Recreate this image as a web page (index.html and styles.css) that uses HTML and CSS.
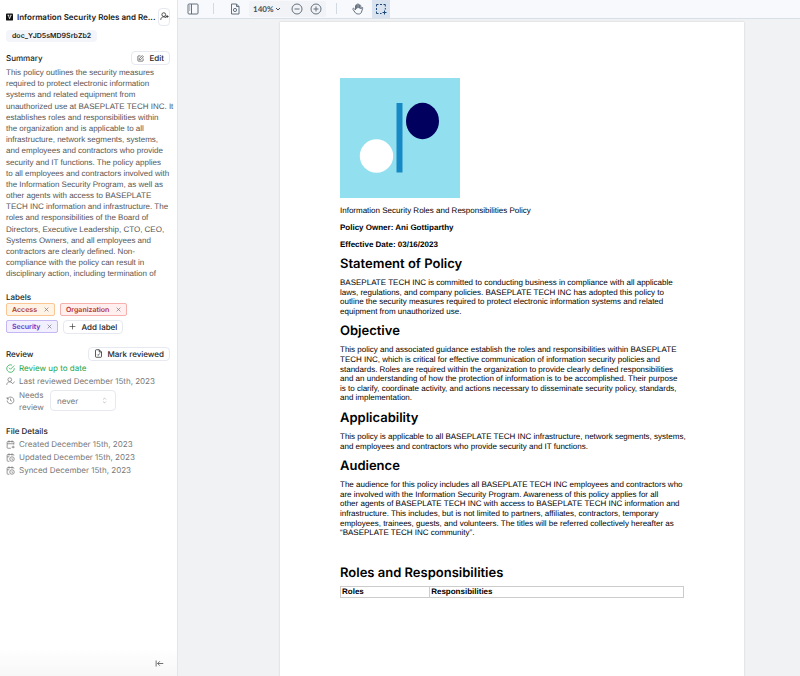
FILE: index.html
```html
<!DOCTYPE html>
<html lang="en">
<head>
<meta charset="utf-8">
<meta name="viewport" content="width=device-width, initial-scale=1">
<title>Information Security Roles and Responsibilities Policy</title>
<link rel="stylesheet" href="styles.css">
</head>
<body>
<div class="app">
  <aside class="sidebar">
    <header class="title-row">
      <svg class="logo" viewBox="0 0 8 8"><rect width="8" height="8" rx="1" fill="#111"/><path d="M1.8 2h2M4.8 2h1.5M2.7 2l1.4 4L5.6 2" fill="none" stroke="#fff" stroke-width=".9"/></svg>
      <h1>Information Security Roles and Re...</h1>
      <button class="btn btn-icon" aria-label="Add owner"><svg class="icon" viewBox="0 0 24 24"><circle cx="10" cy="7" r="5"/><path d="M2 21c0-5 3-8 8-8 3 0 5 1 6 3M19 8v8M15 12h8"/></svg></button>
    </header>
    <span class="doc-id">doc_YJD5sMD9SrbZb2</span>

    <section class="summary">
      <div class="section-head">
        <h2>Summary</h2>
        <button class="btn"><svg class="icon small" viewBox="0 0 24 24"><path d="M12 3H5a2 2 0 0 0-2 2v14a2 2 0 0 0 2 2h14a2 2 0 0 0 2-2v-7M18 2l4 4-10 10H8v-4z"/></svg>Edit</button>
      </div>
      <p>This policy outlines the security measures<br>required to protect electronic information<br>systems and related equipment from<br>unauthorized use at BASEPLATE TECH INC. It<br>establishes roles and responsibilities within<br>the organization and is applicable to all<br>infrastructure, network segments, systems,<br>and employees and contractors who provide<br>security and IT functions. The policy applies<br>to all employees and contractors involved with<br>the Information Security Program, as well as<br>other agents with access to BASEPLATE<br>TECH INC information and infrastructure. The<br>roles and responsibilities of the Board of<br>Directors, Executive Leadership, CTO, CEO,<br>Systems Owners, and all employees and<br>contractors are clearly defined. Non-<br>compliance with the policy can result in<br>disciplinary action, including termination of</p>
    </section>

    <section class="labels">
      <h2>Labels</h2>
      <div class="tags">
        <span class="tag access">Access<button aria-label="Remove Access"><svg viewBox="0 0 8 8"><path d="M1 1l6 6M7 1L1 7"/></svg></button></span>
        <span class="tag organization">Organization<button aria-label="Remove Organization"><svg viewBox="0 0 8 8"><path d="M1 1l6 6M7 1L1 7"/></svg></button></span>
        <span class="tag security">Security<button aria-label="Remove Security"><svg viewBox="0 0 8 8"><path d="M1 1l6 6M7 1L1 7"/></svg></button></span>
        <button class="btn add"><svg class="icon plus" viewBox="0 0 24 24"><path d="M12 2v20M2 12h20"/></svg>Add label</button>
      </div>
    </section>

    <section class="review">
      <div class="section-head">
        <h2>Review</h2>
        <button class="btn"><svg class="icon" viewBox="0 0 24 24"><path d="M14 2H6a2 2 0 0 0-2 2v16a2 2 0 0 0 2 2h12a2 2 0 0 0 2-2V8zM14 2v6h6M9 15l2 2 4-5"/></svg>Mark reviewed</button>
      </div>
      <div class="row ok"><svg class="icon" viewBox="0 0 24 24"><path d="M22 11v1a10 10 0 1 1-6-9M22 4L12 14l-4-4"/></svg>Review up to date</div>
      <div class="row"><svg class="icon" viewBox="0 0 24 24"><circle cx="10" cy="7" r="5"/><path d="M2 21c0-5 3-8 8-8 3 0 5 1 6 3M15 15l3 3 5-6"/></svg>Last reviewed December 15th, 2023</div>
      <div class="row needs">
        <svg class="icon" viewBox="0 0 24 24"><path d="M3 12a9 9 0 1 0 3-7L3 8M3 3v5h5M12 7v5l4 2"/></svg>
        <label for="interval">Needs review</label>
        <span class="select-box">
          <select id="interval"><option>never</option></select>
          <svg class="chevrons" viewBox="0 0 12 20"><path d="M2 7l4-4 4 4M2 13l4 4 4-4"/></svg>
        </span>
      </div>
    </section>

    <section class="details">
      <h2>File Details</h2>
      <div class="row"><svg class="icon" viewBox="0 0 24 24"><path d="M21 12V6a2 2 0 0 0-2-2H5a2 2 0 0 0-2 2v14a2 2 0 0 0 2 2h8M8 1v6M16 1v6M3 10h18M19 15v7M15 19h8"/></svg>Created December 15th, 2023</div>
      <div class="row"><svg class="icon" viewBox="0 0 24 24"><path d="M21 7V6a2 2 0 0 0-2-2H5a2 2 0 0 0-2 2v14a2 2 0 0 0 2 2h4M8 1v6M16 1v6M3 10h6M16 14v3l2 1"/><circle cx="16" cy="16" r="6"/></svg>Updated December 15th, 2023</div>
      <div class="row"><svg class="icon" viewBox="0 0 24 24"><path d="M21 7V6a2 2 0 0 0-2-2H5a2 2 0 0 0-2 2v14a2 2 0 0 0 2 2h4M8 1v6M16 1v6M3 10h6M16 14v3l2 1"/><circle cx="16" cy="16" r="6"/></svg>Synced December 15th, 2023</div>
    </section>

    <footer class="collapse">
      <button aria-label="Collapse sidebar"><svg class="icon" viewBox="0 0 24 24"><path d="M3 4v16M22 12H7M13 6l-6 6 6 6"/></svg></button>
    </footer>
  </aside>

  <main class="viewer">
    <nav class="toolbar" aria-label="Document tools">
      <button class="tool" aria-label="Toggle sidebar"><svg viewBox="0 0 12 12"><rect x="1" y="1" width="10" height="10" rx="1"/><path d="M4.500 1v10M2.200 3h1M2.200 5h1M2.200 7h1"/></svg></button>
      <span class="divider"></span>
      <button class="tool settings" aria-label="View controls"><svg viewBox="0 0 12 12"><path d="M7.500 1H2.500v10h7.500V3.500zM7.500 1v2.500H10"/><circle cx="6" cy="7" r="1.600"/></svg></button>
      <div class="zoom">
        <button class="level">140%<svg viewBox="0 0 6 6"><path d="M1 2l2 2 2-2"/></svg></button>
        <button class="tool" aria-label="Zoom out"><svg viewBox="0 0 12 12"><circle cx="6" cy="6" r="5"/><path d="M3.500 6h5"/></svg></button>
        <button class="tool" aria-label="Zoom in"><svg viewBox="0 0 12 12"><circle cx="6" cy="6" r="5"/><path d="M3.500 6h5M6 3.500v5"/></svg></button>
      </div>
      <span class="divider"></span>
      <button class="tool pan" aria-label="Pan"><svg viewBox="0 0 12 12"><path d="M3.500 7V2.800c0-1 1.200-1 1.200 0V6M4.700 5V1.700c0-1 1.300-1 1.300 0V5M6 5V1.900c0-1 1.400-1 1.400 0V5.500M7.400 5V2.900c0-1 1.400-1 1.400 0V6l.6-1.200c.5-.8 1.700-.4 1.300.5L9.500 9c-.5 1.500-1.500 2-3 2-2 0-3-.7-3.700-2L1 6.500c-.6-1 .6-1.700 1.200-.9L3.500 7"/></svg></button>
      <button class="tool active" aria-label="Select area"><svg viewBox="0 0 12 12"><path d="M1.500 3.500v-2h2M5 1.500h2M8.500 1.500h1.800v2M10.300 5v1.500M1.500 5v2M1.500 8.500v2h2M5 10.500h1.500M9.500 7.500v4M7.500 9.500h4"/></svg></button>
    </nav>
    <div class="canvas">
      <article class="page">
        <svg class="cover" viewBox="0 0 120 120"><rect width="120" height="120" fill="#92e0ef"/><rect x="56.500" y="25" width="6" height="69.500" fill="#1789c4"/><ellipse cx="82.500" cy="43" rx="16.500" ry="18.200" fill="#01005e"/><circle cx="36.500" cy="78" r="16.700" fill="#fff"/></svg>
        <p class="meta">Information Security Roles and Responsibilities Policy</p>
        <p class="meta"><strong>Policy Owner: Ani Gottiparthy</strong></p>
        <p class="meta"><strong>Effective Date: 03/16/2023</strong></p>
        <h2>Statement of Policy</h2>
        <p>BASEPLATE TECH INC is committed to conducting business in compliance with all applicable<br>laws, regulations, and company policies. BASEPLATE TECH INC has adopted this policy to<br>outline the security measures required to protect electronic information systems and related<br>equipment from unauthorized use.</p>
        <h2>Objective</h2>
        <p>This policy and associated guidance establish the roles and responsibilities within BASEPLATE<br>TECH INC, which is critical for effective communication of information security policies and<br>standards. Roles are required within the organization to provide clearly defined responsibilities<br>and an understanding of how the protection of information is to be accomplished. Their purpose<br>is to clarify, coordinate activity, and actions necessary to disseminate security policy, standards,<br>and implementation.</p>
        <h2>Applicability</h2>
        <p>This policy is applicable to all BASEPLATE TECH INC infrastructure, network segments, systems,<br>and employees and contractors who provide security and IT functions.</p>
        <h2>Audience</h2>
        <p>The audience for this policy includes all BASEPLATE TECH INC employees and contractors who<br>are involved with the Information Security Program. Awareness of this policy applies for all<br>other agents of BASEPLATE TECH INC with access to BASEPLATE TECH INC information and<br>infrastructure. This includes, but is not limited to partners, affiliates, contractors, temporary<br>employees, trainees, guests, and volunteers. The titles will be referred collectively hereafter as<br>“BASEPLATE TECH INC community”.</p>
        <h2 class="spaced">Roles and Responsibilities</h2>
        <table>
          <thead><tr><th class="role" scope="col">Roles</th><th scope="col">Responsibilities</th></tr></thead>
        </table>
      </article>
    </div>
  </main>
</div>
</body>
</html>
```
FILE: styles.css
```css
* { box-sizing: border-box; }

body {
  margin: 0;
  font-family: Inter, "Liberation Sans", sans-serif;
  font-size: 8px;
  text-rendering: geometricPrecision;
  color: #222;
}

h1, h2, p { margin: 0; }

button {
  font: inherit;
  color: inherit;
  text-rendering: inherit;
  border: 0;
  padding: 0;
  background: none;
}

svg {
  display: block;
  flex: none;
}

.app {
  display: flex;
  height: 100vh;
  overflow: hidden;
}

.sidebar {
  flex: none;
  display: flex;
  flex-direction: column;
  width: 178px;
  padding: 8px 7px 0 6px;
  border-right: 1px solid #e3e5e8;
  background: #fff;
}

.icon {
  width: 9px;
  height: 9px;
  fill: none;
  stroke: currentColor;
  stroke-width: 2;
}

.icon.small,
.icon.plus {
  width: 7px;
  height: 7px;
}

.title-row {
  display: flex;
  align-items: center;
  height: 17px;
}

.logo {
  width: 7px;
  height: 8px;
  margin-right: 4px;
}

h1 {
  flex: 1;
  white-space: nowrap;
  font-size: 8px;
  font-weight: 600;
  line-height: 12px;
}

.btn {
  display: flex;
  align-items: center;
  justify-content: center;
  gap: 5px;
  height: 14px;
  padding: 0 5px;
  border: 1px solid #e6e9f0;
  border-radius: 4px;
  background: #fff;
  font-weight: 500;
  white-space: nowrap;
}

.btn-icon {
  width: 12px;
  height: 18px;
  padding: 0;
}

.doc-id {
  align-self: flex-start;
  margin-top: 5px;
  padding: 0 6px;
  border-radius: 4px;
  background: #f3f5fa;
  font-size: 7px;
  font-weight: 600;
  line-height: 12px;
}

.section-head {
  display: flex;
  align-items: center;
  justify-content: space-between;
  height: 14px;
}

.sidebar h2 {
  font-size: 8px;
  font-weight: 500;
  line-height: 12px;
}

.summary { margin-top: 9px; }

.summary p {
  margin-top: 2px;
  font-family: "Liberation Sans", sans-serif;
  line-height: 1.4;
  color: #555;
  white-space: nowrap;
}

.labels { margin-top: 11px; }

.tags {
  display: flex;
  flex-wrap: wrap;
  align-items: center;
  gap: 4px 5px;
}

.tag {
  display: flex;
  align-items: center;
  gap: 7px;
  height: 13px;
  padding: 0 5px;
  border: 1px solid;
  border-radius: 2px;
  font-size: 7px;
  font-weight: 600;
}

.tag svg {
  width: 5px;
  height: 5px;
  stroke: #667;
  fill: none;
}

.access {
  color: #b03b28;
  border-color: #fac794;
  background: #fff3e5;
}

.organization {
  color: #b9302f;
  border-color: #f6b0ad;
  background: #fff0ef;
}

.security {
  color: #6333c5;
  border-color: #c5b7f3;
  background: #f2efff;
}

.review { margin-top: 13px; }

.row {
  display: flex;
  align-items: center;
  gap: 4px;
  height: 13px;
  color: #777;
  white-space: nowrap;
}

.section-head + .row { margin-top: 1px; }

.ok { color: #20a548; }

.needs {
  height: 24px;
  margin-top: 1px;
}

.needs label {
  width: 27px;
  line-height: 12px;
  white-space: normal;
}

.select-box {
  position: relative;
  width: 66px;
}

select {
  appearance: none;
  width: 100%;
  height: 21px;
  padding: 0 6px;
  border: 1px solid #e6e9f0;
  border-radius: 4px;
  background: #fff;
  color: #777;
  font: inherit;
  text-rendering: inherit;
}

.chevrons {
  position: absolute;
  top: 7px;
  right: 9px;
  width: 5px;
  height: 7px;
  fill: none;
  stroke: #aaa;
  stroke-width: 2;
}

.details { margin-top: 12px; }

.details h2 { margin-bottom: 1px; }

.collapse {
  display: flex;
  justify-content: flex-end;
  margin: auto -7px 0 -6px;
  padding: 11px 13px 8px 0;
  background: linear-gradient(#fff, #f7f7f7);
  color: #444;
}

.viewer {
  flex: 1;
  min-width: 0;
  display: flex;
  flex-direction: column;
  background: #f0f2f4;
}

.toolbar {
  flex: none;
  display: flex;
  align-items: center;
  height: 19px;
  padding: 0 0 1px 8px;
  border-bottom: 1px solid #d8dfe6;
  background: #f7f9fc;
  color: #65717f;
}

.tool {
  display: grid;
  place-items: center;
  width: 13px;
  height: 17px;
}

.tool svg {
  width: 12px;
  height: 12px;
  fill: none;
  stroke: currentColor;
}

.divider {
  width: 1px;
  height: 11px;
  margin: 0 14px;
  background: #d3d9e0;
}

.zoom {
  display: flex;
  align-items: center;
  gap: 6px;
  height: 16px;
  margin-left: 8px;
  padding: 0 4px;
  border-radius: 2px;
  background: #f1f3f6;
}

.zoom + .divider { margin: 0 14px 0 10px; }

.level {
  display: flex;
  align-items: center;
  gap: 2px;
  margin-right: 3px;
  font-family: Lato, sans-serif;
  font-size: 8px;
  font-weight: 700;
  color: #444e5a;
}

.level svg {
  width: 6px;
  height: 6px;
  fill: none;
  stroke: currentColor;
}

.tool.active {
  width: 18px;
  height: 18px;
  margin-left: 8px;
  background: #d9e3f0;
  color: #1d4775;
}

.canvas {
  flex: 1;
  display: flex;
  padding: 3px 56px 0 102px;
  overflow: hidden;
}

.page {
  flex: 1;
  min-width: 0;
  min-height: 100%;
  padding: 56px 60px;
  background: #fff;
  box-shadow: 0 0 2px #c9cdd1;
  color: #000;
  font-family: "Liberation Sans", sans-serif;
  font-size: 8px;
  line-height: 1.2;
}

.page p { white-space: nowrap; }

.cover {
  width: 120px;
  height: 120px;
}

.page .meta {
  margin-top: 8px;
  line-height: 9px;
}

.page h2 {
  margin: 6px 0 5px;
  font-family: Inter, sans-serif;
  font-size: 13px;
  font-weight: 600;
  line-height: 18px;
}

.page .spaced { margin: 26px 0 4px; }

table {
  width: 100%;
  border-collapse: collapse;
}

th {
  padding: 0 1px;
  border: 1px solid #ccc;
  text-align: left;
  line-height: 10px;
}

.role { width: 26%; }
```
